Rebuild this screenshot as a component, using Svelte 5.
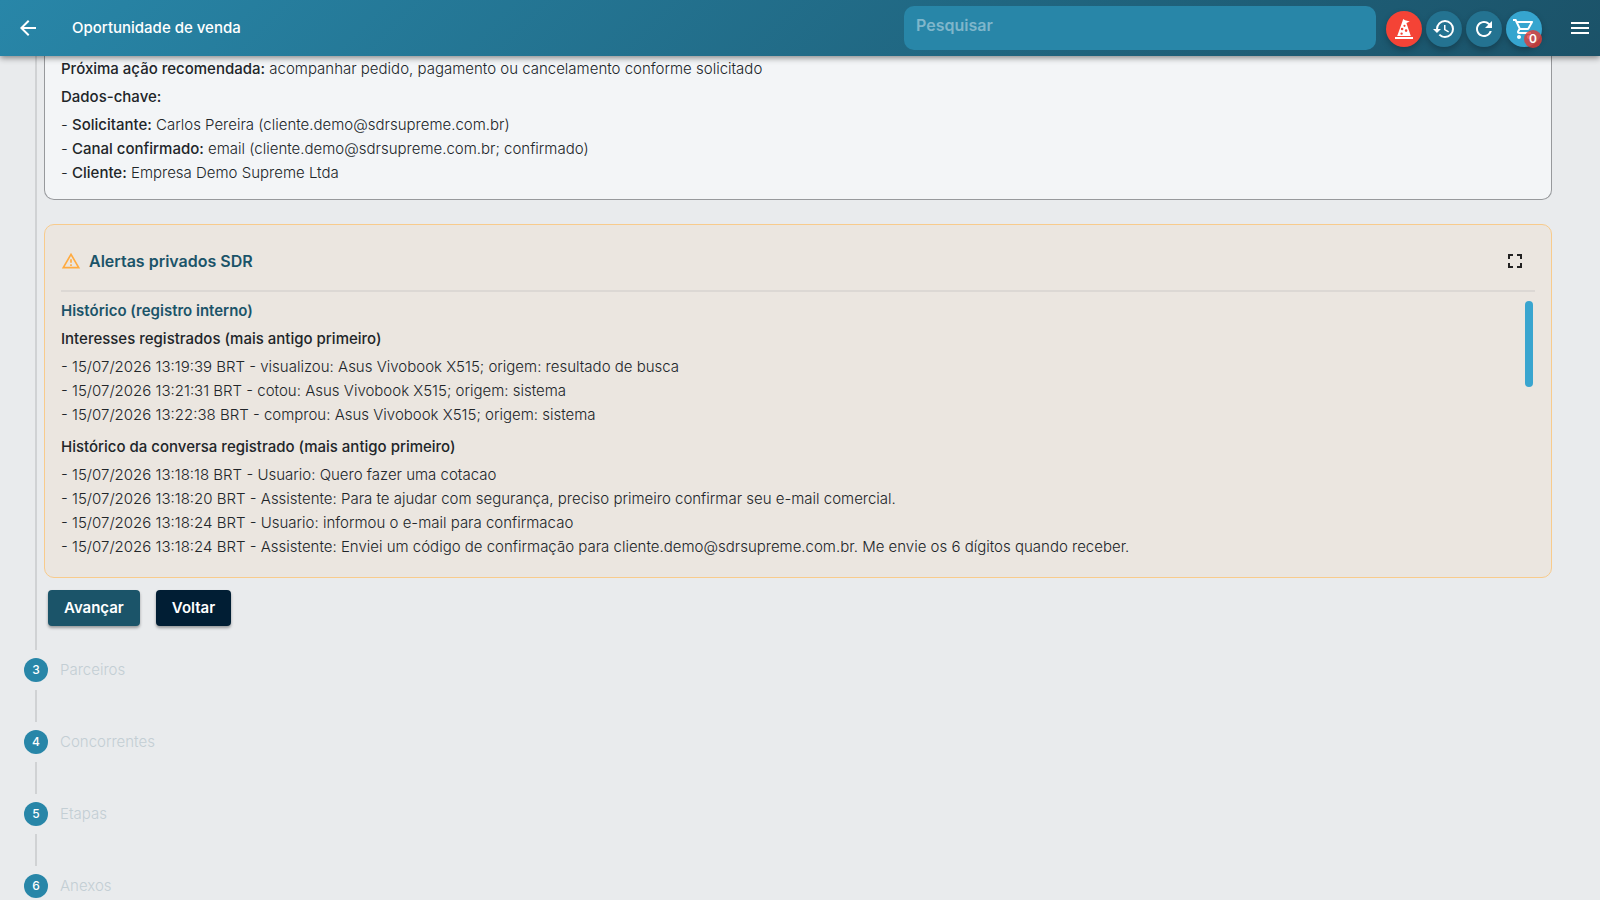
<script lang="ts">
	type Fact = { label: string; value: string };

	const nextAction = 'acompanhar pedido, pagamento ou cancelamento conforme solicitado';

	const facts: Fact[] = [
		{ label: 'Solicitante:', value: 'Carlos Pereira (cliente.demo@sdrsupreme.com.br)' },
		{ label: 'Canal confirmado:', value: 'email (cliente.demo@sdrsupreme.com.br; confirmado)' },
		{ label: 'Cliente:', value: 'Empresa Demo Supreme Ltda' }
	];

	const interests = [
		'15/07/2026 13:19:39 BRT - visualizou: Asus Vivobook X515; origem: resultado de busca',
		'15/07/2026 13:21:31 BRT - cotou: Asus Vivobook X515; origem: sistema',
		'15/07/2026 13:22:38 BRT - comprou: Asus Vivobook X515; origem: sistema'
	];

	const conversation = [
		'15/07/2026 13:18:18 BRT - Usuario: Quero fazer uma cotacao',
		'15/07/2026 13:18:20 BRT - Assistente: Para te ajudar com segurança, preciso primeiro confirmar seu e-mail comercial.',
		'15/07/2026 13:18:24 BRT - Usuario: informou o e-mail para confirmacao',
		'15/07/2026 13:18:24 BRT - Assistente: Enviei um código de confirmação para cliente.demo@sdrsupreme.com.br. Me envie os 6 dígitos quando receber.'
	];

	const steps = [
		{ number: 3, label: 'Parceiros' },
		{ number: 4, label: 'Concorrentes' },
		{ number: 5, label: 'Etapas' },
		{ number: 6, label: 'Anexos' }
	];

	let search = $state('');
	let cartCount = $state(0);
</script>

<div class="page">
	<header class="topbar">
		<button type="button" class="plain" aria-label="Voltar à página anterior">
			<svg viewBox="0 0 24 24"><path d="M20 11H7.83l5.59-5.59L12 4l-8 8 8 8 1.41-1.41L7.83 13H20v-2z" /></svg>
		</button>
		<h1>Oportunidade de venda</h1>

		<input type="search" class="search" placeholder="Pesquisar" aria-label="Pesquisar" bind:value={search} />

		<div class="actions">
			<button type="button" class="round alert" aria-label="Assistente">
				<svg viewBox="0 0 24 24">
					<path
						fill-rule="evenodd"
						d="M3 20h18v2H3zM5.2 19 10.2 5 11.2 2l1.9 1.2 4.7 1.2-3.4 1.5L18.8 19zM11.4 8.8a1.1 1.1 0 1 0 2.2 0 1.1 1.1 0 1 0-2.2 0zM8.8 12a1.3 1.3 0 1 0 2.6 0 1.3 1.3 0 1 0-2.6 0zM12.8 13.6a1.3 1.3 0 1 0 2.6 0 1.3 1.3 0 1 0-2.6 0zM8.4 16.6a1.2 1.2 0 1 0 2.4 0 1.2 1.2 0 1 0-2.4 0z"
					/>
				</svg>
			</button>
			<button type="button" class="round" aria-label="Histórico">
				<svg viewBox="0 0 24 24">
					<path
						d="M13.5 8H12v5l4.28 2.54.72-1.21-3.5-2.08V8zM13 3a9 9 0 0 0-9 9H1l3.96 4.03L9 12H6a7 7 0 0 1 7-7 7 7 0 0 1 7 7 7 7 0 0 1-7 7c-1.93 0-3.68-.79-4.94-2.06l-1.42 1.42A8.9 8.9 0 0 0 13 21a9 9 0 0 0 9-9 9 9 0 0 0-9-9"
					/>
				</svg>
			</button>
			<button type="button" class="round" aria-label="Atualizar">
				<svg viewBox="0 0 24 24">
					<path
						d="M17.65 6.35A7.96 7.96 0 0 0 12 4c-4.42 0-7.99 3.58-7.99 8s3.57 8 7.99 8c3.73 0 6.84-2.55 7.73-6h-2.08A5.99 5.99 0 0 1 12 18c-3.31 0-6-2.69-6-6s2.69-6 6-6c1.66 0 3.14.69 4.22 1.78L13 11h7V4l-2.35 2.35z"
					/>
				</svg>
			</button>
			<button type="button" class="round cart" aria-label="Carrinho">
				<svg viewBox="0 0 24 24">
					<path
						d="M15.55 13c.75 0 1.41-.41 1.75-1.03l3.58-6.49A.996.996 0 0 0 20.01 4H5.21l-.94-2H1v2h2l3.6 7.59-1.35 2.44C4.52 15.37 5.48 17 7 17h12v-2H7l1.1-2h7.45zM6.16 6h12.15l-2.76 5H8.53L6.16 6zM7 18c-1.1 0-1.99.9-1.99 2S5.9 22 7 22s2-.9 2-2-.9-2-2-2zm10 0c-1.1 0-1.99.9-1.99 2s.89 2 1.99 2 2-.9 2-2-.9-2-2-2z"
					/>
				</svg>
				<span class="badge">{cartCount}</span>
			</button>
		</div>

		<button type="button" class="plain" aria-label="Menu">
			<svg viewBox="0 0 24 24"><path d="M3 18h18v-2H3v2zm0-5h18v-2H3v2zm0-7v2h18V6H3z" /></svg>
		</button>
	</header>

	<main>
		<div class="step-content">
			<section class="card summary">
				<p><strong>Próxima ação recomendada:</strong> {nextAction}</p>
				<h3>Dados-chave:</h3>
				<ul>
					{#each facts as fact}
						<li>- <strong>{fact.label}</strong> {fact.value}</li>
					{/each}
				</ul>
			</section>

			<section class="card private">
				<div class="card-head">
					<svg class="warning" viewBox="0 0 24 24">
						<path d="M12 5.99 19.53 19H4.47L12 5.99M12 2 1 21h22L12 2zm1 14h-2v2h2v-2zm0-6h-2v4h2v-4z" />
					</svg>
					<h2>Alertas privados SDR</h2>
					<button type="button" class="expand" aria-label="Tela cheia">
						<svg viewBox="0 0 24 24">
							<path d="M7 14H5v5h5v-2H7v-3zm-2-4h2V7h3V5H5v5zm12 7h-3v2h5v-5h-2v3zM14 5v2h3v3h2V5h-5z" />
						</svg>
					</button>
				</div>

				<div class="scroll-area">
					<div class="log">
						<h3 class="accent">Histórico (registro interno)</h3>
						<h3>Interesses registrados (mais antigo primeiro)</h3>
						<ul>
							{#each interests as entry}
								<li>- {entry}</li>
							{/each}
						</ul>
						<h3>Histórico da conversa registrado (mais antigo primeiro)</h3>
						<ul>
							{#each conversation as entry}
								<li>- {entry}</li>
							{/each}
						</ul>
					</div>
					<div class="track"><div class="thumb"></div></div>
				</div>
			</section>

			<div class="buttons">
				<button type="button" class="next">Avançar</button>
				<button type="button" class="back">Voltar</button>
			</div>
		</div>

		<ol class="steps">
			{#each steps as step}
				<li>
					<span class="number">{step.number}</span>
					<span class="label">{step.label}</span>
				</li>
			{/each}
		</ol>
	</main>
</div>

<style>
	:global(body) {
		background: #e9ebed;
		overflow-x: hidden;
	}

	.page {
		color: #212529;
		font-family: Inter, 'Open Sans', sans-serif;
		font-size: 15px;
		font-weight: 300;
		line-height: 24px;
		height: 100vh;
		overflow: hidden;
	}

	h1,
	h2,
	h3,
	p,
	ul,
	ol {
		margin: 0;
		padding: 0;
		list-style: none;
	}

	button {
		border: 0;
		padding: 0;
		font: inherit;
		cursor: pointer;
	}

	svg {
		display: block;
		width: 24px;
		height: 24px;
		fill: currentColor;
	}

	.topbar {
		position: relative;
		z-index: 2;
		display: flex;
		align-items: center;
		box-sizing: border-box;
		height: 56px;
		padding: 0 8px 0 16px;
		color: #fff;
		background: linear-gradient(135deg, #2886a8, #1b5268);
		box-shadow: 0 2px 6px rgba(0, 0, 0, 0.45);
	}

	.plain {
		color: #fff;
		background: none;
	}

	h1 {
		flex: 1;
		margin-left: 32px;
		font-size: 15px;
		font-weight: 500;
	}

	.search {
		appearance: none;
		box-sizing: border-box;
		width: 30%;
		max-width: 472px;
		height: 44px;
		padding: 0 12px 6px;
		border: 0;
		border-radius: 10px;
		color: #fff;
		background: #2886a8;
		font: inherit;
		font-size: 16px;
		font-weight: 600;
	}

	.search::placeholder {
		color: #7fb6cb;
		opacity: 1;
	}

	.actions {
		display: flex;
		gap: 4px;
		margin: 2px 26px 0 10px;
	}

	.round {
		position: relative;
		display: grid;
		place-items: center;
		width: 36px;
		height: 36px;
		border-radius: 50%;
		color: #fff;
		background: #247391;
		box-shadow: 0 3px 6px rgba(0, 0, 0, 0.25);
	}

	.round.alert {
		background: #f44336;
	}

	.round.cart {
		background: #36a5cf;
	}

	.badge {
		position: absolute;
		right: 0;
		bottom: -1px;
		width: 18px;
		height: 18px;
		border-radius: 50%;
		background: rgba(229, 57, 53, 0.8);
		font-size: 12px;
		font-weight: 600;
		line-height: 18px;
		text-align: center;
	}

	main {
		padding-left: 35px;
	}

	.step-content {
		padding: 0 48px 24px 7px;
		border-left: 2px solid #d0d2d4;
	}

	.card {
		box-sizing: border-box;
		border: 1px solid #97999c;
		border-radius: 10px;
	}

	.summary {
		padding: 1px 16px 14px;
		border-top: 0;
		border-radius: 0 0 10px 10px;
		background: #f3f5f7;
	}

	h3,
	strong {
		font-size: 15px;
		font-weight: 500;
	}

	h3 {
		margin: 4px 0;
	}

	.private {
		margin-top: 24px;
		padding: 16px 16px 18px;
		border-color: #f8cb8c;
		background: #ebe6e0;
	}

	.card-head {
		display: flex;
		align-items: center;
		gap: 8px;
		padding-bottom: 9px;
		border-bottom: 2px solid #dcd8d4;
	}

	.warning {
		width: 20px;
		height: 20px;
		color: #ffab40;
	}

	h2 {
		flex: 1;
		color: #1b5469;
		font-size: 16px;
		font-weight: 600;
	}

	.expand {
		display: grid;
		place-items: center;
		width: 40px;
		height: 40px;
		color: #212121;
		background: none;
	}

	.scroll-area {
		display: flex;
		padding-top: 7px;
	}

	.log {
		flex: 1;
	}

	.log h3:first-child {
		margin-top: 0;
	}

	.log ul + h3 {
		margin-top: 8px;
	}

	.log .accent {
		color: #1b5469;
		font-weight: 600;
	}

	.track {
		width: 8px;
		margin: 2px 2px 0 0;
	}

	.thumb {
		height: 86px;
		border-radius: 4px;
		background: #39a5cf;
	}

	.buttons {
		display: flex;
		gap: 16px;
		margin: 12px 0 0 4px;
	}

	.buttons button {
		height: 36px;
		padding: 0 16px;
		border-radius: 4px;
		color: #fff;
		font-weight: 600;
		box-shadow: 0 2px 3px rgba(0, 0, 0, 0.35);
	}

	.next {
		background: #1b5469;
	}

	.back {
		background: #011e34;
	}

	.steps {
		margin-left: -11px;
	}

	.steps li {
		display: grid;
		grid-template-columns: 24px 1fr;
		column-gap: 12px;
		padding-top: 8px;
	}

	/* connector down to the next step */
	.steps li::after {
		content: '';
		justify-self: center;
		width: 2px;
		height: 32px;
		margin-top: 8px;
		background: #d0d2d4;
	}

	.number {
		border-radius: 50%;
		color: #fff;
		background: #2886a8;
		font-size: 12px;
		font-weight: 500;
		text-align: center;
	}

	.label {
		color: #c3ced4;
	}
</style>
